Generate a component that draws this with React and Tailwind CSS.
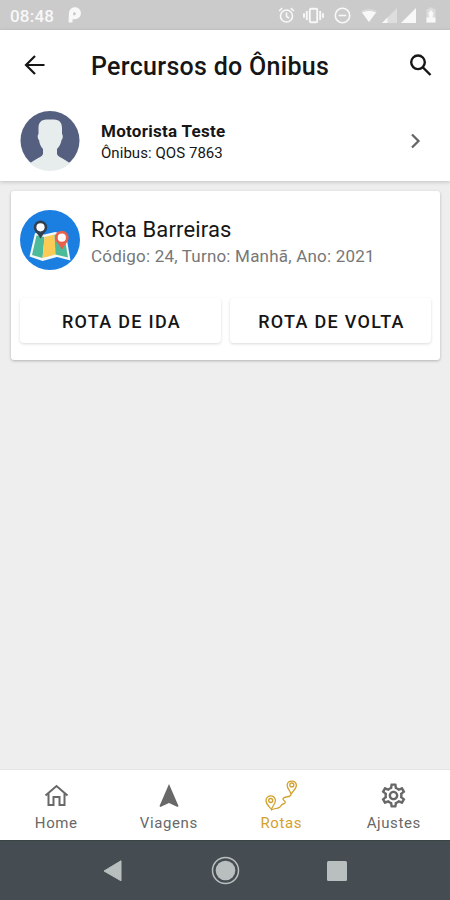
import React, { useState } from 'react';

const StatusBar = () => (
    <div className="h-[30px] shrink-0 bg-[#cbcbcb] text-[#f8f8f8] flex items-center justify-between pl-[10px] pr-[13px]">
        <div className="flex items-center">
            <span className="text-[17px] leading-[30px] pt-[1px] font-medium tracking-[0.2px]">08:48</span>
            <svg className="ml-[13px]" width="14" height="16" viewBox="0 0 14 16" fill="currentColor" fillRule="evenodd">
                <path d="M1.5 15.5L2 5.500A6 6 0 1 1 8 12.300H5.500V15.500zM6 8.300h1.700A1.500 1.500 0 1 0 6 6.600z" />
            </svg>
        </div>
        <div className="flex items-center">
            {/* Alarm */}
            <svg width="17" height="17" viewBox="0 0 17 17" fill="none" stroke="currentColor" strokeWidth="1.6">
                <circle cx="8.5" cy="9" r="6" />
                <path d="M1 4l3.2-2.8M16 4l-3.2-2.8M8.5 5.5v4l2.6 1.6" />
            </svg>
            {/* Vibrate */}
            <svg className="ml-[8px]" width="21" height="17" viewBox="0 0 21 17" fill="none" stroke="currentColor" strokeWidth="1.9">
                <rect x="6.8" y="1.8" width="7.4" height="13.4" rx="1" />
                <path d="M3.8 4v9M17.2 4v9M1 6.3v4.4M20 6.3v4.4" />
            </svg>
            {/* Do not disturb */}
            <svg className="ml-[10px]" width="17" height="17" viewBox="0 0 17 17" fill="none" stroke="currentColor" strokeWidth="1.6">
                <circle cx="8.5" cy="8.5" r="7.2" />
                <path d="M4.8 8.5h7.4" />
            </svg>
            {/* Wifi */}
            <svg className="ml-[9px]" width="18" height="16" viewBox="0 0 18 16" fill="currentColor">
                <path d="M1 4.4C5.5.8 12.5.8 17 4.4L9 15z" opacity=".3" />
                <path d="M2 5.6C6 3.5 12 3.5 16 5.6L9 15z" />
            </svg>
            {/* Signal strength */}
            <svg className="ml-[4px]" width="15" height="15" viewBox="0 0 15 15" fill="currentColor">
                <path d="M15 0v15H0z" opacity=".4" />
                <path d="M5.5 9.5V15H0z" />
            </svg>
            <svg className="ml-[4px]" width="15" height="15" viewBox="0 0 15 15" fill="currentColor">
                <path d="M15 0v15H0z" />
            </svg>
            {/* Battery */}
            <svg className="ml-[9px]" width="12" height="16" viewBox="0 0 12 16" fill="currentColor">
                <path d="M1.5 2H4V.5h4V2h2.5v13.5h-9z" opacity=".4" />
                <path d="M6 3l2.5 3-1 4.5h3v5h-9v-5h3L3.5 6z" />
            </svg>
        </div>
    </div>
);

const Avatar = () => (
    <svg width="60" height="60" viewBox="0 0 60 60">
        <circle cx="30" cy="29.5" r="29.5" fill="#556080" />
        <path
            d="M18.5 17C18.5 12 21 8.5 26.5 8.5H34C39.5 8.5 42 12 42 17V23C43.2 24 43 28 41.5 29C41 33 39 36 37 38V43C37.5 46 46 48.5 49.900 52.400A30 30 0 0 1 10.100 52.400C14 48.500 22.500 46 23 43V38C21 36 19.500 33 19 29C17.500 28 17.300 24 18.500 23Z"
            fill="#e7eced"
        />
    </svg>
);

const MapIcon = () => (
    <svg width="60" height="60" viewBox="0 0 60 60">
        <circle cx="30" cy="30" r="30" fill="#1a7fe0" />
        <path d="M15 23L24.5 24.5L35 22L46 24.5L50.500 50.500L37 47L22.500 51L9.500 46.500Z" fill="#f5f8f6" />
        <path d="M16.5 25.5L24.5 27L22.5 48L12 45Z" fill="#4dba9a" />
        <path d="M24.5 27L34.5 24.5L35.5 44.5L22.5 48Z" fill="#fbcb56" />
        <path d="M34.5 24.5L44.5 27L48 47.5L35.5 44.5Z" fill="#4dba9a" />
        <path d="M20.5 28.5L15 20.5h11z" fill="#2f4052" />
        <circle cx="20.5" cy="17.3" r="6.7" fill="#2f4052" />
        <circle cx="20.5" cy="17.3" r="4.1" fill="#fff" />
        <path d="M42 39.5L36.5 31h11z" fill="#e9604d" />
        <circle cx="41.8" cy="27.7" r="6.9" fill="#e9604d" />
        <circle cx="41.8" cy="27.7" r="4.1" fill="#fff" />
    </svg>
);

const HomeIcon = () => (
    <svg width="26" height="28" viewBox="0 0 26 28" fill="none" stroke="currentColor" strokeWidth="2">
        <path d="M2.5 14.5L13.5 5l11 9.5M5.5 12.5v11.5h5V16h6v8h5V12.5" />
    </svg>
);

const NavigationIcon = () => (
    <svg width="26" height="28" viewBox="0 0 26 28" fill="currentColor">
        <path d="M13 3l9.5 22-.9.9L13 22l-8.6 3.9-.9-.9z" />
    </svg>
);

const RouteIcon = () => (
    <svg width="32" height="32" viewBox="0 0 32 32" fill="none" stroke="currentColor" strokeWidth="1.3">
        <path d="M26 15.5c-.3-3.5-3.9-5.5-3.9-9.5a4.7 4.7 0 0 1 9.3.5c-.5 4-4 5.5-5.4 9z" />
        <path d="M6.5 30.5C5 28 1 26 1 21.8a4.7 4.7 0 0 1 9.4-.5C10.5 25 7 27.5 6.5 30.5z" />
        <circle cx="26.8" cy="6" r="2" />
        <circle cx="5.7" cy="21.5" r="2" />
        <path d="M26 15.5c-.5 2.5-3 2-5 2.5-3 .7-4 2-2 3.5 2.5 1.8 1 3-1 3.5-2.5.5-1.5 3.5-5 4-2 .3-3.5.5-6 1.5" />
    </svg>
);

const SettingsIcon = () => (
    <svg width="29" height="29" viewBox="0 0 24 24" fill="currentColor">
        <path d="M19.43 12.98c.04-.32.07-.64.07-.98s-.03-.66-.07-.98l2.11-1.65c.19-.15.24-.42.12-.64l-2-3.46c-.09-.16-.26-.25-.44-.25-.06 0-.12.01-.17.03l-2.49 1c-.52-.4-1.08-.73-1.69-.98l-.38-2.65C14.46 2.18 14.25 2 14 2h-4c-.25 0-.46.18-.49.42l-.38 2.65c-.61.25-1.17.59-1.69.98l-2.49-1c-.06-.02-.12-.03-.18-.03-.17 0-.34.09-.43.25l-2 3.46c-.13.22-.07.49.12.64l2.11 1.65c-.04.32-.07.65-.07.98s.03.66.07.98l-2.11 1.65c-.19.15-.24.42-.12.64l2 3.46c.09.16.26.25.44.25.06 0 .12-.01.17-.03l2.49-1c.52.4 1.08.73 1.69.98l.38 2.65c.03.24.24.42.49.42h4c.25 0 .46-.18.49-.42l.38-2.65c.61-.25 1.17-.59 1.69-.98l2.49 1c.06.02.12.03.18.03.17 0 .34-.09.43-.25l2-3.46c.12-.22.07-.49-.12-.64l-2.11-1.65zm-1.98-1.71c.04.31.05.52.05.73 0 .21-.02.43-.05.73l-.14 1.13.89.7 1.08.84-.7 1.21-1.27-.51-1.04-.42-.9.68c-.43.32-.84.56-1.25.73l-1.06.43-.16 1.13-.2 1.35h-1.4l-.19-1.35-.16-1.13-1.06-.43c-.43-.18-.83-.41-1.23-.71l-.91-.7-1.06.43-1.27.51-.7-1.21 1.08-.84.89-.7-.14-1.13c-.03-.31-.05-.54-.05-.74s.02-.43.05-.73l.14-1.13-.89-.7-1.08-.84.7-1.21 1.27.51 1.04.42.9-.68c.43-.32.84-.56 1.25-.73l1.06-.43.16-1.13.2-1.35h1.39l.19 1.35.16 1.13 1.06.43c.43.18.83.41 1.23.71l.91.7 1.06-.43 1.27-.51.7 1.21-1.07.85-.89.7.14 1.13zM12 8c-2.21 0-4 1.79-4 4s1.79 4 4 4 4-1.79 4-4-1.79-4-4-4zm0 6c-1.1 0-2-.9-2-2s.9-2 2-2 2 .9 2 2-.9 2-2 2z" />
    </svg>
);

const tabs = [
    { id: 'home', label: 'Home', Icon: HomeIcon },
    { id: 'viagens', label: 'Viagens', Icon: NavigationIcon },
    { id: 'rotas', label: 'Rotas', Icon: RouteIcon },
    { id: 'ajustes', label: 'Ajustes', Icon: SettingsIcon },
];

const RouteButton = ({ children }) => (
    <button className="flex-1 h-[45px] pl-[2px] pt-[1px] rounded-[4px] bg-white text-[#161616] text-[18px] font-medium tracking-[1.3px] whitespace-nowrap shadow-[0_1px_3px_rgba(0,0,0,0.15)]">
        {children}
    </button>
);

const App = () => {
    const [activeTab, setActiveTab] = useState('rotas');

    return (
        <div className="w-[450px] h-[900px] flex flex-col overflow-hidden bg-[#eeeeee] font-[Roboto,sans-serif]">
            <StatusBar />

            {/* Header */}
            <div className="h-[151px] shrink-0 bg-white shadow-[0_1px_4px_rgba(0,0,0,0.2)]">
                <header className="h-[70px] flex items-center pl-[24px] pr-[17px]">
                    <svg width="22" height="22" viewBox="0 0 22 22" fill="none" stroke="#161616" strokeWidth="2.2">
                        <path d="M20.5 11H2.5M11 2l-9 9 9 9" />
                    </svg>
                    <h1 className="ml-[45px] mt-[3px] flex-1 text-[25px] font-medium text-[#161616] tracking-[0.3px] whitespace-nowrap">Percursos do Ônibus</h1>
                    <svg width="24" height="24" viewBox="0 0 24 24" fill="none" stroke="#161616" strokeWidth="2.4">
                        <circle cx="9" cy="9.3" r="6.8" />
                        <path d="M14 14.5l7.5 7.5" />
                    </svg>
                </header>

                <div className="h-[81px] flex items-center pl-[20px] pr-[28px]">
                    <Avatar />
                    <div className="ml-[21px] mt-[2px] flex-1 text-[#161616] whitespace-nowrap">
                        <p className="text-[17px] leading-[22px] font-bold tracking-[0.28px]">Motorista Teste</p>
                        <p className="text-[15px] leading-[22px] tracking-[0.05px]">Ônibus: QOS 7863</p>
                    </div>
                    <svg width="12" height="16" viewBox="0 0 12 16" fill="none" stroke="#666" strokeWidth="2.3">
                        <path d="M2 1.5l6.5 6.5L2 14.5" />
                    </svg>
                </div>
            </div>

            {/* Main Content */}
            <main className="flex-1 pl-[11px] pr-[10px] pt-[10px]">
                <div className="h-[169px] rounded-[3px] bg-white shadow-[0_1px_3px_rgba(0,0,0,0.25)] px-[9px]">
                    <div className="flex items-center pt-[19px]">
                        <MapIcon />
                        <div className="ml-[11px] mt-[4px] whitespace-nowrap">
                            <h2 className="text-[22px] leading-[28px] text-[#161616] tracking-[0.15px]">Rota Barreiras</h2>
                            <p className="text-[17px] leading-[24px] text-[#777] tracking-[0.2px]">Código: 24, Turno: Manhã, Ano: 2021</p>
                        </div>
                    </div>
                    <div className="mt-[28px] flex gap-[9px]">
                        <RouteButton>ROTA DE IDA</RouteButton>
                        <RouteButton>ROTA DE VOLTA</RouteButton>
                    </div>
                </div>
            </main>

            {/* Tabs */}
            <nav className="h-[71px] shrink-0 grid grid-cols-4 bg-white border-t border-[#e4e4e4]">
                {tabs.map(({ id, label, Icon }) => (
                    <button
                        key={id}
                        className={`flex flex-col items-center ${activeTab === id ? 'text-[#d3a12c]' : 'text-[#686868]'}`}
                        onClick={() => setActiveTab(id)}
                    >
                        <span className="h-[42px] pt-[8px] flex items-center justify-center"><Icon /></span>
                        <span className="text-[15px] leading-[22px] tracking-[0.6px]">{label}</span>
                    </button>
                ))}
            </nav>

            {/* System buttons */}
            <div className="h-[60px] shrink-0 bg-[#464d52] border-t border-[#384544] flex items-center justify-between px-[103px]">
                <svg width="20" height="22" viewBox="0 0 20 22" fill="#b9bfbf">
                    <path d="M18 .8v20L1 11z" stroke="#b9bfbf" strokeLinejoin="round" />
                </svg>
                <svg width="29" height="29" viewBox="0 0 29 29">
                    <circle cx="14.5" cy="14.5" r="13" fill="none" stroke="#b9bfbf" strokeWidth="1.5" />
                    <circle cx="14.5" cy="14.5" r="9.8" fill="#b9bfbf" />
                </svg>
                <div className="w-[20px] h-[20px] rounded-[1.5px] bg-[#b9bfbf]" />
            </div>
        </div>
    );
};

export default App;
